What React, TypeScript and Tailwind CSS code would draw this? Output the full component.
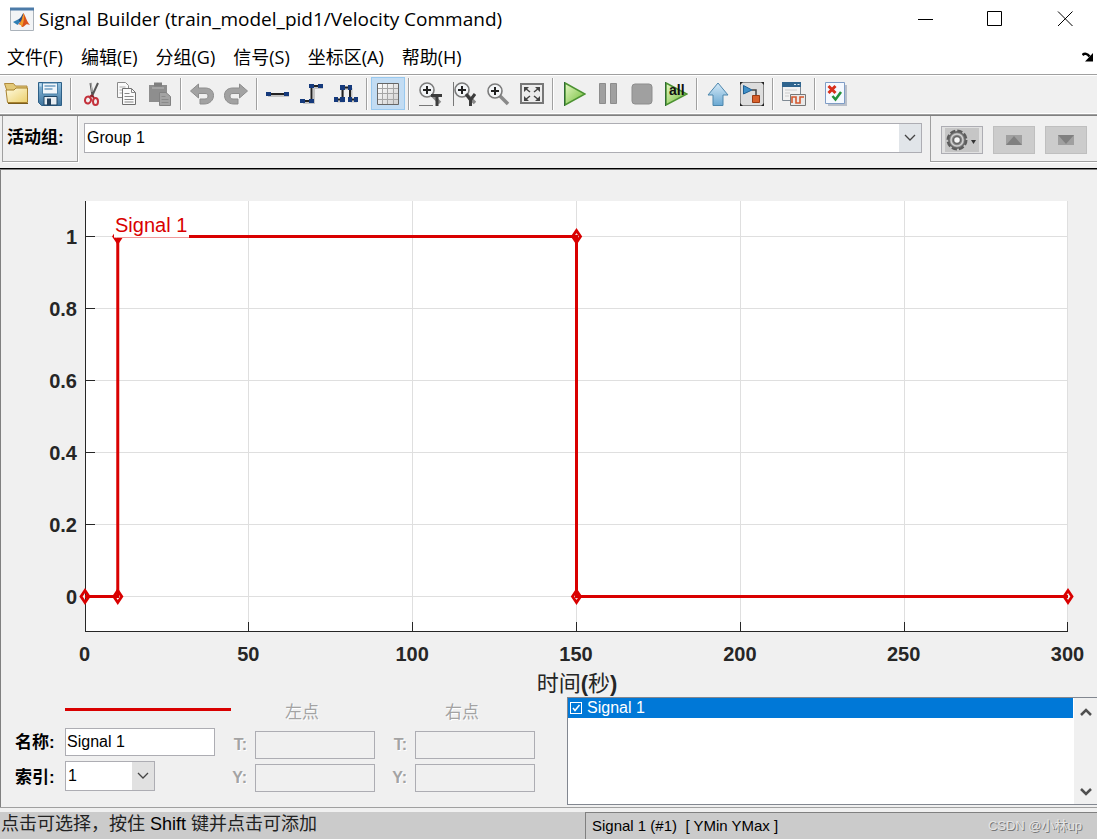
import { useState, type ReactNode } from 'react';

const NAVY = '#153a7c';

function Icon({ children }: { children: ReactNode }) {
  return (
    <svg width="24" height="24" viewBox="0 0 24 24" fill="none" aria-hidden="true">
      {children}
    </svg>
  );
}

function OpenIcon() {
  return (
    <Icon>
      <path d="M0.5 1.5h9l2 2.5h11.5v5h-20z" fill="#e2c878" stroke="#b08b3e" />
      <path d="M3.5 20.5L2 8h8l2-2h11.5v14.5z" fill="url(#folder)" stroke="#a8822f" />
      <path d="M4 21.5h20" stroke="#7a5c1c" />
    </Icon>
  );
}

function SaveIcon() {
  return (
    <Icon>
      <path d="M0.5 0.5h23v23h-20l-3-3z" fill="url(#disk)" stroke="#2d5f86" />
      <path d="M4.5 1h15v11h-15z" fill="#f1f6fa" stroke="#4b81a8" />
      <path d="M6.5 4h11M6.5 7h8" stroke="#8fb4d0" strokeWidth="2" />
      <path d="M6 14.5h13V23H6z" fill="#e8eef3" stroke="#1f4565" />
      <path d="M9 16.5h4V23H9z" fill="#24415c" />
      <path d="M1.5 1.5h2v3h-2z" fill="#bcdcf2" />
    </Icon>
  );
}

function CutIcon() {
  return (
    <Icon>
      <path d="M10.5 1l2 13M18 1l-6 13" stroke="#555" strokeWidth="2" />
      <path d="M11 1l1 9" stroke="#bbb" />
      <path d="M12 13l-3 3M12 13l2 3" stroke="#8d2028" strokeWidth="2" />
      <ellipse cx="8" cy="18" rx="3" ry="3.5" stroke="#c4323c" strokeWidth="2" transform="rotate(20 8 18)" />
      <ellipse cx="15.5" cy="19.5" rx="2.5" ry="3.5" stroke="#c4323c" strokeWidth="2" />
    </Icon>
  );
}

function CopyIcon() {
  return (
    <Icon>
      <path d="M3.5 0.5h8l3 3v12h-11z" fill="#fafafa" stroke="#8a8a8a" />
      <path d="M5.5 5h6M5.5 8h6M5.5 11h5" stroke="#aaa" />
      <path d="M8.5 6.5h9l4 4v12h-13z" fill="#fafafa" stroke="#6f6f6f" />
      <path d="M17.5 6.5v4h4M10.5 11.5h5M10.5 14.5h9M10.5 17.5h9M10.5 20h9" stroke="#888" />
    </Icon>
  );
}

function PasteIcon() {
  return (
    <Icon>
      <path d="M1 3h5V1.5h8V3h5v17H1z" fill="#8e8e8e" />
      <path d="M6 0.5h8v4H6z" fill="#7f7f7f" />
      <path d="M4 6h12" stroke="#a4a4a4" strokeWidth="2" />
      <path d="M11.5 10.5H18l4.5 4v9h-11z" fill="#a3a3a3" stroke="#828282" />
      <path d="M13.5 14.5h4M13.5 17.5h7M13.5 20.5h7" stroke="#8a8a8a" />
    </Icon>
  );
}

function UndoIcon({ flip = false }: { flip?: boolean }) {
  return (
    <Icon>
      <g transform={flip ? 'matrix(-1 0 0 1 24 0)' : undefined}>
        <path
          d="M0.5 9L8.5 2v4H15c5.5 0 8.5 3 8.5 7.5S20 22 14 22h-4v-5h5c2 0 3-1.2 3-3s-1-2.5-3-2.5H8.5V16z"
          fill="#a2a2a2"
          stroke="#8d8d8d"
        />
      </g>
    </Icon>
  );
}

function LineIcon() {
  return (
    <Icon>
      <path d="M2 14h21" stroke="#c4c4c4" strokeWidth="2" />
      <path d="M3 12h19" stroke="#222" strokeWidth="2" />
      <path d="M0 10h5v4H0zM18 10h5v4h-5z" fill={NAVY} />
    </Icon>
  );
}

function StepIcon() {
  return (
    <Icon>
      <path d="M3 21h11V6h9" stroke="#c4c4c4" strokeWidth="2" />
      <path d="M2 19h9.5V4H21" stroke="#222" strokeWidth="2" />
      <path d="M0 17h5v4H0zM9 17h5v4H9zM9 2h5v4H9zM18 2h5v4h-5z" fill={NAVY} />
    </Icon>
  );
}

function PulseIcon() {
  return (
    <Icon>
      <path d="M3 19.5h6V7h8.5v12.5H23" stroke="#c4c4c4" strokeWidth="2" />
      <path d="M2 17.5h6.5v-12H16v12h6" stroke="#222" strokeWidth="2" />
      <path d="M0 15h4v5H0zM6 15h5v5H6zM14 15h4v5h-4zM20 15h4v5h-4zM6 3h5v5H6zM14 3h4v5h-4z" fill={NAVY} />
    </Icon>
  );
}

function GridIcon() {
  return (
    <Icon>
      <path d="M1.5 1.5h21v21h-21z" fill="url(#sheet)" stroke="#666" />
      <path d="M6.5 2v20M11.5 2v20M17.5 2v20M2 6.5h20M2 11.5h20M2 17.5h20" stroke="#a5a5a5" />
    </Icon>
  );
}

function Lens({ cx, cy }: { cx: number; cy: number }) {
  return (
    <g transform={`translate(${cx} ${cy})`}>
      <path d="M5 5l8 8" stroke="#8a8a8a" strokeWidth="3.5" />
      <circle r="7" fill="#f3f5f7" stroke="#7b7b7b" strokeWidth="1.6" />
      <path d="M-4 0h8M0-4v8" stroke="#222" strokeWidth="2" />
    </g>
  );
}

function ZoomTimeIcon() {
  return (
    <Icon>
      <Lens cx={9} cy={8} />
      <path d="M13 13.5h11M19 13v11" stroke="#3c3c3c" strokeWidth="3" />
      <path d="M1 23.5h14" stroke="#777" />
    </Icon>
  );
}

function ZoomYIcon() {
  return (
    <Icon>
      <path d="M1.5 0v24" stroke="#777" />
      <Lens cx={10} cy={8} />
      <path d="M14 12l4.5 6L23 12M18.5 17v7" stroke="#3c3c3c" strokeWidth="3" />
    </Icon>
  );
}

function ZoomIcon() {
  return (
    <Icon>
      <Lens cx={9} cy={9} />
    </Icon>
  );
}

function FitIcon() {
  return (
    <Icon>
      <path d="M1 2h22v19H1z" fill="#ececec" stroke="#777" strokeWidth="2" />
      <path d="M4 5h5l-5 5zM20 5v5l-5-5zM4 19v-5l5 5zM20 19h-5l5-5z" fill="#444" />
      <path d="M5 6l5 4M19 6l-5 4M5 18l5-4M19 18l-5-4" stroke="#444" strokeWidth="1.5" />
    </Icon>
  );
}

function PlayIcon() {
  return (
    <Icon>
      <path d="M3 1l20 11L3 23z" fill="url(#run)" stroke="#4c9232" strokeWidth="1.5" />
      <path d="M2.5 0v24" stroke="#2f6b35" />
    </Icon>
  );
}

function PauseIcon() {
  return (
    <Icon>
      <path d="M3.5 1.5h6v20h-6zM14.5 1.5h6v20h-6z" fill="#a0a0a0" stroke="#8d8d8d" />
    </Icon>
  );
}

function StopIcon() {
  return (
    <Icon>
      <rect x="2" y="2" width="20" height="20" rx="3" fill="#a0a0a0" stroke="#8d8d8d" />
    </Icon>
  );
}

function RunAllIcon() {
  return (
    <Icon>
      <path d="M2 1l21 11L2 23z" fill="url(#run)" stroke="#4c9232" strokeWidth="1.5" />
      <path d="M1.5 0v24" stroke="#2f6b35" />
      <text x="5" y="13" fontSize="14" fontWeight="bold" fontFamily="Liberation Sans, sans-serif" fill="#111">
        all
      </text>
    </Icon>
  );
}

function UpIcon() {
  return (
    <Icon>
      <path d="M12 1l10 12h-5v10.5H7V13H2z" fill="url(#up)" stroke="#4d87ad" />
    </Icon>
  );
}

function ModelIcon() {
  return (
    <Icon>
      <path d="M0.5 0.5h23v23h-23z" fill="#ddd" stroke="#888" />
      <path d="M0 0h3L0 3zM24 0v3l-3-3zM0 24v-3l3 3zM24 24h-3l3-3z" fill="#222" />
      <path d="M12 8h4v6" stroke="#444" strokeWidth="1.5" />
      <path d="M3.5 3.5L12 8l-8.5 4z" fill="#3f8fc7" stroke="#1d5f94" />
      <path d="M12.5 13.5h7v7h-7z" fill="#d8612c" stroke="#9b3b13" />
    </Icon>
  );
}

function ScopeIcon() {
  return (
    <Icon>
      <path d="M0.5 0.5h18v18h-18z" fill="#f2f2f2" stroke="#7f8a94" />
      <path d="M0 0h19v5H0z" fill="#2f648e" />
      <path d="M12 2.5h2M15.5 2.5h2" stroke="#dce9f3" />
      <path d="M3 8h12M3 11h5M3 14h4" stroke="#ccc" />
      <path d="M8.5 12.5h15v11h-15z" fill="#e9e9e9" stroke="#777" />
      <path d="M10 21v-6h4v6h4v-6h4" stroke="#d4582f" strokeWidth="1.6" />
    </Icon>
  );
}

function VerifyIcon() {
  return (
    <Icon>
      <path d="M4 3h19v21H4z" fill="#b9bfc9" />
      <path d="M1.5 0.5h19v21h-19z" fill="#f5f9ff" stroke="#7f9dc6" />
      <path d="M4.5 4l7 7M11.5 4l-7 7" stroke="#d8301c" strokeWidth="3" />
      <path d="M8.5 14l3 3.5L17 10" stroke="#23903a" strokeWidth="2.5" />
    </Icon>
  );
}

// Shared gradients, referenced by id from the toolbar icons
function Gradients() {
  return (
    <svg className="absolute size-0" aria-hidden="true">
      <defs>
        <linearGradient id="folder" x1="0" y1="0" x2="1" y2="1">
          <stop offset="0" stopColor="#fffbe0" />
          <stop offset="1" stopColor="#eccf6b" />
        </linearGradient>
        <linearGradient id="disk" x1="0" y1="0" x2="0" y2="1">
          <stop offset="0" stopColor="#8fc0e0" />
          <stop offset="1" stopColor="#3f749d" />
        </linearGradient>
        <linearGradient id="sheet" x1="0" y1="0" x2="1" y2="1">
          <stop offset="0" stopColor="#fff" />
          <stop offset="1" stopColor="#cfcfcf" />
        </linearGradient>
        <linearGradient id="run" x1="0" y1="0" x2="1" y2="1">
          <stop offset="0" stopColor="#e6f8c6" />
          <stop offset="1" stopColor="#6dbb33" />
        </linearGradient>
        <linearGradient id="up" x1="0" y1="0" x2="0" y2="1">
          <stop offset="0" stopColor="#d5eaf8" />
          <stop offset="1" stopColor="#6aa8d2" />
        </linearGradient>
      </defs>
    </svg>
  );
}

const toolGroups: { label: string; icon: ReactNode; active?: boolean; disabled?: boolean }[][] = [
  [
    { label: 'Open', icon: <OpenIcon /> },
    { label: 'Save', icon: <SaveIcon /> },
  ],
  [
    { label: 'Cut', icon: <CutIcon /> },
    { label: 'Copy', icon: <CopyIcon /> },
    { label: 'Paste', icon: <PasteIcon />, disabled: true },
  ],
  [
    { label: 'Undo', icon: <UndoIcon />, disabled: true },
    { label: 'Redo', icon: <UndoIcon flip />, disabled: true },
  ],
  [
    { label: 'Constant', icon: <LineIcon /> },
    { label: 'Step', icon: <StepIcon /> },
    { label: 'Pulse', icon: <PulseIcon /> },
  ],
  [{ label: 'Snap grid', icon: <GridIcon />, active: true }],
  [
    { label: 'Zoom time', icon: <ZoomTimeIcon /> },
    { label: 'Zoom Y', icon: <ZoomYIcon /> },
    { label: 'Zoom', icon: <ZoomIcon /> },
    { label: 'Fit', icon: <FitIcon /> },
  ],
  [
    { label: 'Run', icon: <PlayIcon /> },
    { label: 'Pause', icon: <PauseIcon />, disabled: true },
    { label: 'Stop', icon: <StopIcon />, disabled: true },
    { label: 'Run all', icon: <RunAllIcon /> },
  ],
  [
    { label: 'Up', icon: <UpIcon /> },
    { label: 'Show model', icon: <ModelIcon /> },
  ],
  [{ label: 'Scope', icon: <ScopeIcon /> }],
  [{ label: 'Verify', icon: <VerifyIcon /> }],
];

function TitleBar() {
  return (
    <header className="flex h-[37px] items-center justify-between bg-white pr-6 pl-[10px]">
      <div className="flex items-center gap-[5px]">
        <svg width="24" height="24" viewBox="0 0 24 24" aria-hidden="true">
          <path d="M0.5 1.5h23v22h-23z" fill="#f2f4f6" stroke="#aab2ba" />
          <path d="M0 0.5h24v3H0z" fill="#4c7ba8" />
          <path d="M3 15l5-2.5 2.5 2L7.5 18z" fill="#2f7fb5" />
          <path d="M8 12.5c3-1 3.5-4.5 5.5-6.5L12 14l-2 1z" fill="#1d4f86" />
          <path d="M13.5 6c2 3 3.5 9 6.5 12-2.5-1-3.5-1.500-5 .5-1.5 1.5-2 1.5-3 1.5-1-2-2-3-4-2.5 3.5-2 4-7 5.5-11.5z" fill="#d9541e" />
          <path d="M13.5 6c1 4 .5 8-1.5 14-.8-1.5-1.5-2.5-2.5-2.7 2.5-3 3.2-7 4-11.3z" fill="#f3a02c" />
        </svg>
        <h1 className="font-['Open_Sans','Noto_Sans',sans-serif] text-[19px] leading-6">
          Signal Builder (train_model_pid1/Velocity Command)
        </h1>
      </div>
      <div className="flex gap-[54px]">
        <button aria-label="Minimize">
          <svg width="16" height="16" stroke="#000" fill="none"><path d="M1 8.5h15" /></svg>
        </button>
        <button aria-label="Maximize">
          <svg width="16" height="16" stroke="#000" fill="none"><path d="M0.5 0.5h14v14h-14z" /></svg>
        </button>
        <button aria-label="Close">
          <svg width="16" height="16" stroke="#000" fill="none"><path d="M1 0.5L15.5 15M15.5 0.5L1 15" /></svg>
        </button>
      </div>
    </header>
  );
}

function MenuBar() {
  return (
    <nav className="flex h-[37px] items-center justify-between bg-white pt-[2px] pr-[3px] pl-[7px]">
      <div className="flex gap-[18px] font-['Open_Sans','Noto_Sans_CJK_SC',sans-serif] text-[18px] leading-6">
        {['文件(F)', '编辑(E)', '分组(G)', '信号(S)', '坐标区(A)', '帮助(H)'].map((item) => (
          <button key={item}>{item}</button>
        ))}
      </div>
      <button aria-label="Dock">
        <svg width="12" height="10" viewBox="0 0 12 10">
          <path d="M0.5 3c2-2 5-1.5 7 1.5" fill="none" stroke="#000" strokeWidth="2.5" />
          <path d="M11 1v8.5H3z" />
        </svg>
      </button>
    </nav>
  );
}

function Toolbar() {
  return (
    <div className="border-t border-b border-[#a0a0a0] bg-white py-px">
      <div className="-ml-px flex h-[37px] items-start bg-[#f0f0f0] pt-px">
        {toolGroups.map((group, i) => (
          <div key={i} className="flex items-center">
            {i > 0 && <div className="mx-[3px] h-8 w-[2px] border-r border-l border-r-white border-l-[#a0a0a0]" />}
            {group.map((tool) => (
              <button
                key={tool.label}
                aria-label={tool.label}
                disabled={tool.disabled}
                className={
                  tool.active
                    ? 'flex h-[33px] w-[34px] items-center justify-center border border-[#99c9ef] bg-[#c2dcf3]'
                    : 'flex h-[33px] w-[34px] items-center justify-center'
                }
              >
                {tool.icon}
              </button>
            ))}
          </div>
        ))}
      </div>
    </div>
  );
}

function Chevron() {
  return (
    <svg width="12" height="8" viewBox="0 0 12 8" fill="none" stroke="#444" strokeWidth="1.3" aria-hidden="true">
      <path d="M1 1l5 5 5-5" />
    </svg>
  );
}

function GroupBar() {
  return (
    <div className="flex h-[54px] gap-[6px] border-t border-b border-t-[#808080] border-b-black pb-[6px] pl-[2px]">
      <label
        htmlFor="group"
        className="w-[76px] border border-t-0 border-[#a0a0a0] pt-[10px] pl-1 text-[17px] leading-6 font-bold shadow-[1px_1px_0_#fff]"
      >
        活动组:
      </label>
      <div className="relative mt-[7px] h-[30px] flex-1">
        <select
          id="group"
          className="h-full w-full appearance-none rounded-none border border-[#adadb3] bg-white pl-[2px] text-[16px]"
        >
          <option>Group 1</option>
        </select>
        <span className="pointer-events-none absolute inset-y-px right-px flex w-[22px] items-center justify-center bg-[#e1e5e9]">
          <Chevron />
        </span>
      </div>
      <div className="ml-[2px] flex gap-[10px] border-b border-l border-[#a0a0a0] pt-[10px] pr-[10px] pl-[10px] shadow-[0_1px_0_#fff]">
        <button aria-label="Settings" className="flex h-7 w-[42px] items-center justify-center border border-[#adadb3] bg-[#e1e1e1]">
          <svg width="34" height="24" viewBox="0 0 34 24">
            <path d="M0 0h34v24H0z" fill="#c6c6c6" />
            <circle cx="12" cy="12" r="9" fill="#777" stroke="#5c5c5c" strokeWidth="3" strokeDasharray="5.07 2" />
            <circle cx="12" cy="12" r="8" fill="#8a8a8a" stroke="#666" />
            <circle cx="12" cy="12" r="6" fill="none" stroke="#d0d0d0" strokeWidth="1.5" />
            <circle cx="12" cy="12" r="3.5" fill="#f8f8f8" stroke="#666" strokeWidth="1.5" />
            <path d="M26 12h5l-2.5 4z" fill="#333" />
          </svg>
        </button>
        <button aria-label="Previous group" disabled className="flex h-7 w-[42px] items-center justify-center border border-[#bfbfbf] bg-[#ccc]">
          <svg width="16" height="10"><path d="M0 0h16v10H0z" fill="#a0a0a0" /><path d="M0 10l8-9 8 9z" fill="#808080" /></svg>
        </button>
        <button aria-label="Next group" disabled className="flex h-7 w-[42px] items-center justify-center border border-[#bfbfbf] bg-[#ccc]">
          <svg width="16" height="10"><path d="M0 0h16v10H0z" fill="#a0a0a0" /><path d="M0 0l8 9 8-9z" fill="#808080" /></svg>
        </button>
      </div>
    </div>
  );
}

const points = [
  [0, 0],
  [10, 0],
  [10, 1],
  [150, 1],
  [150, 0],
  [300, 0],
];

const xTicks = [0, 50, 100, 150, 200, 250, 300];
const yTicks = [0, 0.2, 0.4, 0.6, 0.8, 1];

const px = (t: number) => 84 + (t * 983) / 300;
const py = (v: number) => 426.5 - v * 360;
// grid lines sit on whole pixels so they stay one pixel wide
const gridX = (t: number) => Math.floor(px(t) - 0.1) + 0.5;

function Chart() {
  return (
    <svg viewBox="0 0 1096 527" className="block w-full" fontFamily="Liberation Sans, Noto Sans CJK SC, sans-serif">
      <rect x="84" y="31" width="983" height="430" fill="#fff" />
      <g stroke="#dfdfdf" shapeRendering="crispEdges">
        {xTicks.slice(1).map((t) => (
          <path key={t} d={`M${gridX(t)} 31V461`} />
        ))}
        {yTicks.map((v) => (
          <path key={v} d={`M84 ${py(v)}H1067`} />
        ))}
      </g>
      <g stroke="#262626" fill="none" shapeRendering="crispEdges">
        <path d="M84.5 31V461.5H1067" />
        {xTicks.slice(1).map((t) => (
          <path key={t} d={`M${gridX(t)} 452V461`} />
        ))}
        {yTicks.map((v) => (
          <path key={v} d={`M84 ${py(v)}H94`} />
        ))}
      </g>
      <g fill="#262626" fontSize="20" fontWeight="bold">
        {xTicks.map((t) => (
          <text key={t} x={px(t) - 0.5} y="491" textAnchor="middle">
            {t}
          </text>
        ))}
        {yTicks.map((v) => (
          <text key={v} x="76" y={py(v) + 7.5} textAnchor="end">
            {v}
          </text>
        ))}
      </g>
      <text x="576" y="521" textAnchor="middle" fontSize="22" fill="#262626">
        时间<tspan fontWeight="bold">(</tspan>秒<tspan fontWeight="bold">)</tspan>
      </text>
      <g fill="none" stroke="#d90000">
        <polyline points={points.map(([t, v]) => `${px(t)},${py(v)}`).join(' ')} strokeWidth="3" />
        {points.map(([t, v]) => (
          <path key={`${t}-${v}`} d={`M${px(t)} ${py(v) - 6}l4 6-4 6-4-6z`} strokeWidth="2.8" />
        ))}
      </g>
      <rect x="113" y="43" width="75" height="24.6" fill="#fff" />
      <text x="114" y="62" fontSize="20" fill="#d90000">
        Signal 1
      </text>
    </svg>
  );
}

function PointFields({ title, id }: { title: string; id: string }) {
  return (
    <fieldset disabled className="w-[160px] text-[#a3a3a3]">
      <legend className="w-full pt-1 pb-[6px] pl-[14px] text-center text-[17px] leading-6 text-shadow-[1px_1px_0_#fff]">
        {title}
      </legend>
      <div className="grid grid-cols-[32px_120px] gap-x-2 gap-y-[5px]">
        {['T', 'Y'].map((axis) => (
          <div key={axis} className="contents">
            <label htmlFor={`${id}-${axis}`} className="text-right text-[16px] leading-7 font-bold text-shadow-[1px_1px_0_#fff]">
              {axis}:
            </label>
            <input id={`${id}-${axis}`} className="h-7 w-full border border-[#adadb3] bg-[#f0f0f0]" />
          </div>
        ))}
      </div>
    </fieldset>
  );
}

function SignalPanel() {
  const [name, setName] = useState('Signal 1');
  const [checked, setChecked] = useState(true);

  return (
    <section className="flex h-[109px]">
      <div className="flex flex-1 basis-[566px]">
        <div className="w-[214px] pt-[11px] pl-[14px]">
          <div className="ml-[50px] h-[3px] w-[166px] bg-[#d90000]" />
          <div className="grid grid-cols-[43px_150px] items-center gap-x-[7px] gap-y-[5px] pt-[17px] text-[17px]">
            <label htmlFor="name" className="pt-[2px] leading-6 font-bold">名称:</label>
            <input
              id="name"
              value={name}
              onChange={(e) => setName(e.target.value)}
              className="h-7 border border-[#adadb3] bg-white px-[1px] text-[16px]"
            />
            <label htmlFor="index" className="pt-1 leading-6 font-bold">索引:</label>
            <div className="relative h-[30px] w-[90px]">
              <select id="index" className="h-full w-full appearance-none rounded-none border border-[#adadb3] bg-white pl-[2px] text-[16px]">
                <option>1</option>
              </select>
              <span className="pointer-events-none absolute inset-y-px right-px flex w-[22px] items-center justify-center bg-[#e1e1e1]">
                <Chevron />
              </span>
            </div>
          </div>
        </div>
        <PointFields title="左点" id="left" />
        <PointFields title="右点" id="right" />
      </div>
      <div className="flex h-[108px] flex-1 basis-[530px] border border-r-0 border-[#828790] bg-white">
        <div className="flex-1">
          <label className="flex h-5 items-center gap-[5px] bg-[#0078d7] pl-[2px] text-[16px] leading-5 text-white">
            <span className="relative flex size-3">
              <input
                type="checkbox"
                checked={checked}
                onChange={(e) => setChecked(e.target.checked)}
                className="size-3 appearance-none border border-white"
              />
              {checked && (
                <svg className="pointer-events-none absolute inset-0" width="12" height="12" fill="none" stroke="#fff" strokeWidth="1.5">
                  <path d="M3 6l2 2.5L9.5 3" />
                </svg>
              )}
            </span>
            Signal 1
          </label>
        </div>
        <div className="ml-px flex w-[23px] flex-col items-center justify-between bg-[#f0f0f0] pt-[9px] pb-[7px]">
          <button aria-label="Scroll up">
            <svg width="12" height="10" fill="none" stroke="#505050" strokeWidth="2.5"><path d="M1 8l5-5 5 5" /></svg>
          </button>
          <button aria-label="Scroll down">
            <svg width="12" height="10" fill="none" stroke="#505050" strokeWidth="2.5"><path d="M1 2l5 5 5-5" /></svg>
          </button>
        </div>
      </div>
    </section>
  );
}

function StatusBar() {
  return (
    <footer className="flex h-[33px] border-t border-b border-t-[#a0a0a0] border-b-white pt-1">
      <p className="flex-1 basis-[585px] bg-[#cbcbcb] pl-px text-[18px] leading-6 text-[#222]">
        点击可选择，按住 <span className="text-black">Shift</span> 键并点击可添加
      </p>
      <div className="flex flex-1 basis-[512px] items-center justify-between border-t border-l border-[#808080] bg-[#cbcbcb] pr-[15px] pl-[6px]">
        <span className="text-[15px] leading-6 whitespace-pre">Signal 1 (#1)  [ YMin YMax ]</span>
        <span className="text-[13px] leading-6 text-[#e4e4e4] text-shadow-[1px_1px_0_#777]">CSDN @小林up</span>
      </div>
    </footer>
  );
}

export default function App() {
  return (
    <div
      lang="zh-CN"
      className="flex min-h-screen flex-col overflow-x-hidden bg-[#f0f0f0] font-['Liberation_Sans','Noto_Sans_CJK_SC',sans-serif] text-black"
    >
      <Gradients />
      <TitleBar />
      <MenuBar />
      <Toolbar />
      <GroupBar />
      <main className="flex-1 border-t border-l border-[#808080]">
        <Chart />
        <SignalPanel />
      </main>
      <StatusBar />
    </div>
  );
}
